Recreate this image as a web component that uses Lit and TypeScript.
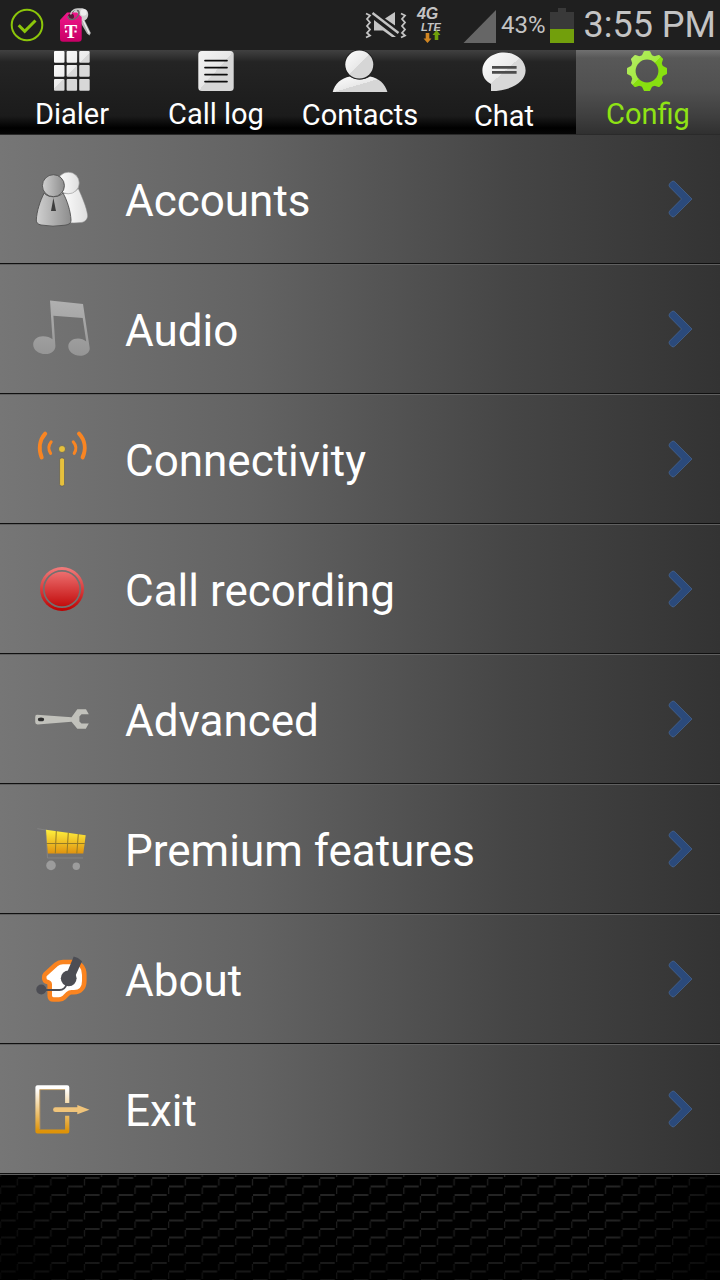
import { LitElement, html, css, svg } from "lit";
import { customElement, property } from "lit/decorators.js";
import { classMap } from "lit/directives/class-map.js";

const gloss = (id: string, from: string, mid: string, to: string) => svg`
  <linearGradient id=${id} x1="0" y1="0" x2="1" y2="1">
    <stop offset="0" stop-color=${from} /><stop offset=".5" stop-color=${mid} />
    <stop offset=".5" stop-color=${to} /><stop offset="1" stop-color=${to} />
  </linearGradient>`;

const vertical = (id: string, from: string, to: string) => svg`
  <linearGradient id=${id} x1="0" y1="0" x2="0" y2="1">
    <stop offset="0" stop-color=${from} /><stop offset="1" stop-color=${to} />
  </linearGradient>`;

const tabIcons: Record<string, unknown> = {
  dialer: html`<svg width="36" height="41" viewBox="0 0 36 41" aria-hidden="true">
    <defs>
      <linearGradient id="g" gradientUnits="userSpaceOnUse" x1="0" y1="2" x2="36" y2="38">
        <stop offset="0" stop-color="#fff" /><stop offset=".5" stop-color="#ececec" />
        <stop offset=".5" stop-color="#d8d8d8" /><stop offset="1" stop-color="#d8d8d8" />
      </linearGradient>
    </defs>
    ${[1, 15, 29].map((y) => [0, 12.6, 25.2].map((x) => svg`<rect x=${x} y=${y} width="10.5" height="11.8" rx="1" fill="url(#g)" />`))}
  </svg>`,
  log: html`<svg width="36" height="41" viewBox="0 0 36 41" aria-hidden="true">
    <defs>${gloss("g", "#f4f4f4", "#e6e6e6", "#d6d6d6")}</defs>
    <rect x=".3" y="1" width="35.4" height="40" rx="3.5" fill="url(#g)" />
    <path d="M7 10.6H29M7 17.6H29M7 24.6H29M7 31.6H29" stroke="#0c0c0c" stroke-width="1.7" stroke-linecap="round" />
  </svg>`,
  contacts: html`<svg width="56" height="42" viewBox="0 0 56 42" aria-hidden="true">
    <defs>${gloss("g", "#fdfdfd", "#e9e9e9", "#d6d6d6")}</defs>
    <path d="M.6 42.4C2.4 34 9 28 18 26.4C24 30.4 32 30.4 38 26.4C47 28 53.5 34 55.5 42.4Z" fill="url(#g)" />
    <circle cx="27.3" cy="14.6" r="15" fill="#202020" />
    <circle cx="27.3" cy="14.6" r="14" fill="url(#g)" />
  </svg>`,
  chat: html`<svg width="44" height="43" viewBox="0 0 44 43" aria-hidden="true">
    <defs>${gloss("g", "#fff", "#e9e9e9", "#d8d8d8")}</defs>
    <path d="M22 2.5C34 2.5 43.6 10.5 43.6 20.5C43.6 31.5 30 41 9 41V34C3.5 31 .4 26.5 .4 20.5C.4 10.5 10 2.5 22 2.5Z" fill="url(#g)" />
    <path d="M10 17.4H34.6M10 22.4H34.6" stroke="#4c4c4c" stroke-width="2.6" />
  </svg>`,
  config: html`<svg width="42" height="41" viewBox="1 0 42 41" aria-hidden="true">
    <defs>
      <linearGradient id="g" gradientUnits="userSpaceOnUse" x1="4" y1="4" x2="38" y2="38">
        <stop offset="0" stop-color="#b5ec66" /><stop offset=".5" stop-color="#a3e93e" />
        <stop offset=".5" stop-color="#88e010" /><stop offset="1" stop-color="#88e010" />
      </linearGradient>
      <mask id="m">
        <g fill="#fff">
          <circle cx="21" cy="21" r="16.6" />
          ${[0, 45, 90, 135, 180, 225, 270, 315].map((a) => svg`<path transform=${`rotate(${a} 21 21)`} d="M15.6 6L17.8 1.6Q18 1 18.8 1H23.2Q24 1 24.2 1.6L26.4 6Z" />`)}
        </g>
        <circle cx="21" cy="21" r="11.4" fill="#000" />
      </mask>
    </defs>
    <rect width="42" height="42" fill="url(#g)" mask="url(#m)" />
  </svg>`,
};

const rowIcons: Record<string, unknown> = {
  accounts: svg`
    <defs>
      <linearGradient id="a"><stop offset="0" stop-color="#d0d0d0" /><stop offset="1" stop-color="#8d8d8d" /></linearGradient>
      <linearGradient id="b"><stop offset="0" stop-color="#fff" /><stop offset="1" stop-color="#dedede" /></linearGradient>
    </defs>
    <path d="M30 25C36 28 43 27 48.3 21.5C52 30 56.5 40 57.6 48C58 52 55 55 51.5 55.4C46 56.2 38 56 33 55Z" fill="url(#b)" stroke="#8b8b8b" stroke-width=".5" />
    <circle cx="38.4" cy="16" r="10.8" fill="url(#b)" stroke="#9a9a9a" stroke-width=".6" />
    <path d="M14.2 26C18 31 28 31 33 26C37 33 40.6 44 41 53C41 57 38 57.6 35 58.2Q23 60.3 11 58Q6.2 57 6.3 53C6.8 44 10 34 14.2 26Z" fill="url(#a)" stroke="#4f4f4f" stroke-width=".9" />
    <circle cx="23.4" cy="18.7" r="11" fill="url(#a)" stroke="#4f4f4f" stroke-width=".9" />
    <path d="M23.4 31L26 44H21Z" fill="#3d3d3d" />`,
  audio: svg`
    <defs>${vertical("a", "#b0b0b0", "#959595")}</defs>
    <path d="M20 3.6L53 7L59.7 51C60 55.500 55.500 58.800 50 58.800C43.500 58.800 38.300 54.500 38.300 49.600C38.300 45 42.500 41.600 48 41.600C51.200 41.600 54 42.600 56.200 44.600L52.700 21L23.400 18.700L25.400 49C25.400 53.500 21.500 57.100 15.500 57.100C8.500 57.100 3.200 53 3.200 47.500C3.200 42.500 7.500 39.200 13 39.200C17 39.200 20 40.300 22.500 42.300Z" fill="url(#a)" />`,
  connectivity: svg`
    <g fill="none" stroke="#f98522" stroke-linecap="round">
      <path d="M15.200 6.700C9.500 13 8.300 22 11.700 30.400M49 6.700C55 13 56.300 22 52.600 30.400" stroke-width="4" />
      <path d="M21.200 14.800C18.400 18.300 18.200 22.500 20.600 26.400M43.200 14.800C46.300 18.300 46.600 22.500 44.200 26.400" stroke-width="3" />
    </g>
    <g fill="#e6c03c" stroke="#5d5d5d" stroke-width=".7">
      <circle cx="32" cy="22" r="3.500" /><rect x="29.600" y="31" width="4.900" height="28" rx="1.800" />
    </g>`,
  recording: svg`
    <defs>${vertical("a", "#f27c7c", "#bd0000")}</defs>
    <circle cx="32" cy="32" r="22" fill="url(#a)" />
    <circle cx="32" cy="32" r="18.200" fill="none" stroke="#73706f" stroke-width="1.700" />`,
  advanced: svg`
    <path d="M7 27.800L41.500 30.200L47.300 22.200H56L58.800 27.200H51.500L49.400 29.600V34.400L51.500 36.500H58.800L55.800 41.800H47.300L41.500 34.800L7.500 37.400Q5.200 37.400 5.200 35V30Q5.200 27.800 7 27.800Z" fill="#c1c1bb" />
    <ellipse cx="11" cy="32.400" rx="3.100" ry="1.900" fill="#2c2c2c" />`,
  premium: svg`
    <defs>${vertical("a", "#fff13e", "#e0930f")}</defs>
    <path d="M7.300 11.700L16 13L17.500 41H53" fill="none" stroke="#858585" stroke-width=".9" />
    <path d="M16 12.700L55.700 18.300L53.300 36.400H17.800Z" fill="url(#a)" />
    <path d="M16.500 26.500H54.800M26.300 14L25.300 36.400M38.300 15.500L37 36.400M48.300 17L46.800 36.400" stroke="#947b28" stroke-width="1" />
    <circle cx="21" cy="48.400" r="4.800" fill="#9c9c9c" /><circle cx="46.300" cy="49.300" r="3.700" fill="#9c9c9c" />`,
  about: svg`
    <path d="M15 27.500L26 17.500Q29 15 33 15H42C50 15 54.300 20 54.300 28V34C54.300 41 50 45.300 44 45.300H41.500Q39.500 45.300 38 46.700L34.500 50.200Q32 52.500 29 52.500H23.500Q19.700 52.500 19.700 48.500V37.500Q19.700 35.500 17.500 35Q14.300 34.500 14.200 31Q14.100 28.500 15 27.500Z" fill="#fff" stroke="#fa8420" stroke-width="4.600" stroke-linejoin="round" />
    <path d="M43.700 9.600Q48 10.300 52 14.200L44 32L36 28Z" fill="#4c4d54" />
    <circle cx="38.700" cy="31.300" r="7.900" fill="#4c4d54" />
    <path d="M11 43H29.500C33 43 35.500 41 36.700 37" fill="none" stroke="#4c4d54" stroke-width="1.800" />
    <circle cx="11.300" cy="42.500" r="5" fill="#4c4d54" />`,
  exit: svg`
    <defs>
      <linearGradient id="a" gradientUnits="userSpaceOnUse" x1="0" y1="12" x2="0" y2="54">
        <stop offset="0" stop-color="#fff" /><stop offset="1" stop-color="#de9308" />
      </linearGradient>
    </defs>
    <path d="M37.200 26V10.300H7.500V54.500H37.200V38.700" fill="none" stroke="url(#a)" stroke-width="4.200" stroke-linejoin="round" />
    <path d="M9.800 52V12.600H35" fill="none" stroke="#d9a658" stroke-width=".7" />
    <path d="M25.500 32.700H49" stroke="#f0c47a" stroke-width="4.800" stroke-linecap="round" />
    <path d="M47.300 28L59.500 32.700L47.300 37.300Z" fill="#f0c47a" />`,
};

@customElement("status-bar")
export class StatusBar extends LitElement {
  static styles = css`
    :host {
      display: flex;
      align-items: center;
      justify-content: space-between;
      height: 50px;
      padding: 0 4px 0 10px;
      box-sizing: border-box;
      background: #1f1f1f;
      color: #c4c4c4;
      white-space: nowrap;
    }
    .group {
      display: flex;
      align-items: center;
      gap: 4px;
    }
    .notices {
      gap: 14px;
    }
    svg {
      display: block;
    }
    .percent {
      font-size: 24px;
      line-height: 48px;
    }
    .time {
      font-size: 36px;
      line-height: 48px;
      padding-left: 6px;
    }
    .network {
      display: flex;
      flex-direction: column;
      width: 40px;
      height: 50px;
      padding-top: 6px;
      box-sizing: border-box;
      font-family: "Liberation Sans", sans-serif;
      font-style: italic;
      font-weight: 700;
    }
    .generation {
      font-size: 16px;
      line-height: 16px;
    }
    .standard {
      padding-left: 4px;
      font-size: 11px;
      line-height: 11px;
    }
    .traffic {
      padding-left: 6px;
      margin-top: -3px;
    }
    .brand {
      font-family: "Liberation Serif", serif;
      font-weight: 700;
    }
  `;

  render() {
    return html`
      <div class="group notices">
        <svg width="34" height="50" viewBox="10 0 34 50" role="img" aria-label="Registered">
          <g fill="none" stroke="#8cc60a">
            <circle cx="27" cy="25" r="15.300" stroke-width="2" />
            <path d="M18.700 25.300L24.700 31.300L35.500 20.500" stroke-width="3" />
          </g>
        </svg>
        <svg width="36" height="50" viewBox="58 0 36 50" role="img" aria-label="Account">
          <defs>${vertical("tag", "#f0168a", "#c80066")}</defs>
          <path d="M79 20L83 17L90.800 33L89.500 35.500L87 33.500Z" fill="#b5b5b5" />
          <path d="M82.500 19L89.300 33.500" stroke="#f0f0f0" stroke-width="1.200" />
          <path d="M73 12.500C75 8.500 82 6.500 86.500 10C89.500 13 88.500 19 84.500 20.500C80 21.500 77 19.500 76 17Z" fill="#cfcfcf" />
          <circle cx="83.500" cy="12.500" r="3.200" fill="#ededed" />
          <path d="M67 12.500H77L81.700 17V38.500Q81.700 41.800 78.500 41.800H63Q60 41.800 60 38.500V20Z" fill="url(#tag)" />
          <circle cx="71" cy="16.500" r="3" fill="#5a1738" />
          <path d="M68 16C68 19.500 72.500 20.500 76 18C79.500 15.500 80 11.500 77 10" fill="none" stroke="#6b6b6b" stroke-width="1.500" />
          <path d="M70.500 14.500C71.500 10 76.500 8 80 9.500" fill="none" stroke="#c6c6c6" stroke-width="1.500" />
          <text class="brand" x="70.800" y="37.800" font-size="19" text-anchor="middle" fill="#fff">T</text>
          <path d="M65 31.500H67.200M74.400 31.500H76.600" stroke="#fff" stroke-width="2.200" />
        </svg>
      </div>
      <div class="group">
        <svg width="48" height="50" viewBox="364 0 48 50" role="img" aria-label="Vibrate">
          <g fill="none" stroke="#c4c4c4" stroke-width="1.800">
            <path d="M365 13.500L369 15.500L366 19L369 22.500L366 26L369 29.500L366 33L369 35.500L365 37.500" />
            <path d="M400 13.500L404 15.500L401 19L404 22.500L401 26L404 29.500L401 33L404 35.500L400 37.500" />
          </g>
          <path d="M394 12V25.500L384 18.500ZM373 20L395 37H391L382 30.500H373Z" fill="#c4c4c4" />
          <path d="M371.500 13L397.500 33" stroke="#c4c4c4" stroke-width="2.400" />
        </svg>
        <div class="network">
          <span class="generation">4G</span>
          <span class="standard">LTE</span>
          <svg class="traffic" width="20" height="14" viewBox="424 30 20 14" aria-hidden="true">
            <path d="M426.700 33H430.300V38.500H432.500L428.500 43L424.500 38.500H426.700Z" fill="#cf8522" />
            <path d="M435.700 40H439.300V35H441.500L437.500 30L433.500 35H435.700Z" fill="#6f9f0a" />
          </svg>
        </div>
        <svg width="36" height="50" viewBox="461 0 36 50" role="img" aria-label="Signal">
          <path d="M463.500 43L496 10V43Z" fill="#666" />
        </svg>
        <span class="percent">43%</span>
        <svg width="24" height="50" viewBox="550 0 24 50" role="img" aria-label="Battery">
          <path d="M550 12H558V8H566V12H574V43H550Z" fill="#393939" />
          <path d="M550 29H574V43H550Z" fill="#729f0c" />
        </svg>
        <time class="time">3:55 PM</time>
      </div>
    `;
  }
}

@customElement("nav-tab")
export class NavTab extends LitElement {
  @property() label = "";
  @property() icon = "";
  @property({ type: Boolean }) active = false;

  static styles = css`
    :host {
      display: block;
      min-width: 0;
    }
    .tab {
      display: flex;
      flex-direction: column;
      align-items: center;
      width: 100%;
      height: 84px;
      margin: 0;
      padding: 0;
      border: 0;
      background: linear-gradient(#414141 0, #242424 12px, #1b1b1b 66px, #000 78px, #060606 100%);
      color: #fff;
      font: 29px/34px Roboto, sans-serif;
      white-space: nowrap;
      cursor: pointer;
    }
    .active {
      background: linear-gradient(#707070 0, #585858 8px, #505050 40px, #3f3f3f 66px, #303030 100%);
      color: #8fe314;
    }
    .icon svg {
      display: block;
    }
    .label {
      padding-top: 6px;
    }
  `;

  render() {
    return html`<button
      type="button"
      class=${classMap({ tab: true, active: this.active })}
      aria-current=${this.active ? "page" : "false"}
    >
      <span class="icon">${tabIcons[this.icon]}</span>
      <span class="label">${this.label}</span>
    </button>`;
  }
}

@customElement("settings-row")
export class SettingsRow extends LitElement {
  @property() label = "";
  @property() icon = "";

  static styles = css`
    :host {
      display: block;
    }
    .row {
      display: flex;
      align-items: center;
      gap: 31px;
      width: 100%;
      height: 128px;
      margin: 0;
      padding: 0 28px 0 30px;
      border: 0;
      background: none;
      color: #fff;
      font: 44px/56px Roboto, sans-serif;
      text-align: left;
      cursor: pointer;
    }
    .label {
      flex: 1;
      padding-top: 4px;
    }
    svg {
      display: block;
      flex: none;
    }
  `;

  render() {
    return html`<button type="button" class="row">
      <svg width="64" height="64" viewBox="0 0 64 64" aria-hidden="true">${rowIcons[this.icon]}</svg>
      <span class="label">${this.label}</span>
      <svg width="24" height="38" viewBox="0 0 24 38" aria-hidden="true">
        <path d="M3.700 1.600Q5.300 .4 6.900 1.900L24 19L6.900 36.100Q5.300 37.600 3.700 36.400L1.600 34.300Q.4 32.700 1.600 31.100L13.500 19L1.600 6.900Q.4 5.300 1.600 3.700Z" fill="#2b4a7b" stroke="#4d6f9f" stroke-width=".6" />
      </svg>
    </button>`;
  }
}

@customElement("app-root")
export class AppRoot extends LitElement {
  private tabs = [
    { icon: "dialer", label: "Dialer" },
    { icon: "log", label: "Call log" },
    { icon: "contacts", label: "Contacts" },
    { icon: "chat", label: "Chat" },
    { icon: "config", label: "Config" },
  ];

  private rows = [
    { icon: "accounts", label: "Accounts" },
    { icon: "audio", label: "Audio" },
    { icon: "connectivity", label: "Connectivity" },
    { icon: "recording", label: "Call recording" },
    { icon: "advanced", label: "Advanced" },
    { icon: "premium", label: "Premium features" },
    { icon: "about", label: "About" },
    { icon: "exit", label: "Exit" },
  ];

  static styles = css`
    :host {
      display: flex;
      flex-direction: column;
      min-height: 100vh;
      background: #000;
      font-family: Roboto, sans-serif;
    }
    .tabs {
      display: grid;
      grid-template-columns: repeat(5, 1fr);
    }
    .list {
      margin: 0;
      padding: 0;
      list-style: none;
    }
    .item {
      border-top: 1px solid #606060;
      border-bottom: 1px solid #101010;
      background: linear-gradient(90deg, #767676, #636363 35%, #464646 70%, #333) padding-box;
    }
    .item:first-child {
      border-top-color: #2a2a2a;
    }
    .weave {
      flex: 1;
      display: flex;
      border-top: 1px solid #606060;
      min-height: 60px;
    }
    .weave svg {
      flex: 1;
      width: 100%;
      height: auto;
    }
  `;

  render() {
    return html`
      <status-bar></status-bar>
      <nav class="tabs" aria-label="Sections">
        ${this.tabs.map((t) => html`<nav-tab .icon=${t.icon} .label=${t.label} .active=${t.icon === "config"}></nav-tab>`)}
      </nav>
      <ul class="list">
        ${this.rows.map((r) => html`<li class="item"><settings-row .icon=${r.icon} .label=${r.label}></settings-row></li>`)}
      </ul>
      <div class="weave">
        <svg aria-hidden="true">
          <defs>
            <pattern id="steps" width="33.600" height="17" patternUnits="userSpaceOnUse" x="0" y="2">
              <path d="M1 9.500H15.500M17.800 1H32.300" stroke="#252525" stroke-width="2" />
              <path d="M17.300 2V8.500M.6 10.500V17" stroke="#1f1f1f" stroke-width="1.300" />
            </pattern>
            <linearGradient id="fade" x1="0" y1="0" x2="0" y2="1">
              <stop offset="0" stop-color="#000" stop-opacity="0" />
              <stop offset=".4" stop-color="#000" stop-opacity=".1" />
              <stop offset="1" stop-color="#000" stop-opacity=".8" />
            </linearGradient>
            <linearGradient id="sides">
              <stop offset="0" stop-color="#000" stop-opacity=".6" />
              <stop offset=".15" stop-color="#000" stop-opacity="0" />
              <stop offset=".85" stop-color="#000" stop-opacity="0" />
              <stop offset="1" stop-color="#000" stop-opacity=".6" />
            </linearGradient>
          </defs>
          <rect width="100%" height="100%" fill="url(#steps)" />
          <rect width="100%" height="100%" fill="url(#fade)" />
          <rect width="100%" height="100%" fill="url(#sides)" />
        </svg>
      </div>
    `;
  }
}
